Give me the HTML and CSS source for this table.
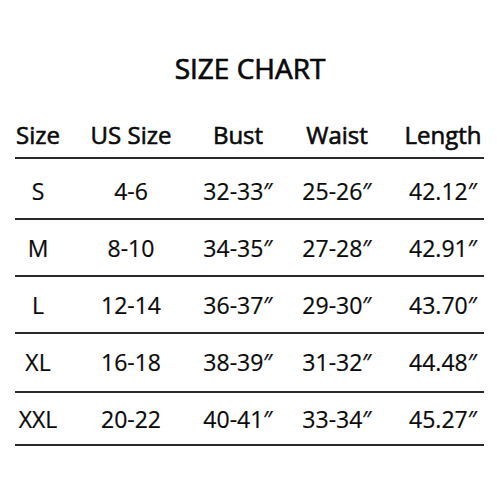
FILE: index.html
```html
<!DOCTYPE html>
<html>
<head>
<meta charset="utf-8">
<link rel="stylesheet" href="styles.css">
</head>
<body>
<div class="page">
  <h1 class="title">SIZE CHART</h1>
  <div class="chart">
    <div class="row head">
      <span>Size</span><span>US Size</span><span>Bust</span><span>Waist</span><span>Length</span>
    </div>
    <div class="row r1">
      <span>S</span><span>4-6</span><span>32-33″</span><span>25-26″</span><span>42.12″</span>
    </div>
    <div class="row r2">
      <span>M</span><span>8-10</span><span>34-35″</span><span>27-28″</span><span>42.91″</span>
    </div>
    <div class="row r3">
      <span>L</span><span>12-14</span><span>36-37″</span><span>29-30″</span><span>43.70″</span>
    </div>
    <div class="row r4">
      <span>XL</span><span>16-18</span><span>38-39″</span><span>31-32″</span><span>44.48″</span>
    </div>
    <div class="row r5">
      <span>XXL</span><span>20-22</span><span>40-41″</span><span>33-34″</span><span>45.27″</span>
    </div>
  </div>
</div>
</body>
</html>
```
FILE: styles.css
```css
html, body {
  margin: 0;
  padding: 0;
  background: #fff;
}
.page {
  width: 500px;
  height: 500px;
  font-family: "Open Sans", "Noto Sans", sans-serif;
  color: #0a0a0a;
  padding-top: 54px;
  box-sizing: border-box;
}
.title {
  margin: 0;
  font-size: 28px;
  line-height: 28px;
  font-weight: 400;
  text-align: center;
  -webkit-text-stroke: 0.7px #0a0a0a;
}
.chart {
  margin: 41px 16px 0 15px;
}
.row {
  display: grid;
  grid-template-columns: 46px 140px 74px 124px 88px;
  justify-items: center;
  font-size: 23px;
  line-height: 23px;
  border-bottom: 2px solid #2a2a2a;
  padding: 17px 0 15px;
  white-space: nowrap;
  -webkit-text-stroke: 0.2px #0a0a0a;
}
.row span {
  justify-self: center;
}
.head {
  font-size: 24px;
  line-height: 24px;
  font-weight: 400;
  padding: 0 0 10px;
  -webkit-text-stroke: 0.6px #0a0a0a;
}
.r1 { padding: 21px 0 15px; }
.r4 { padding: 17px 0 17px; }
.r5 { padding: 15px 0 13px; }
```
